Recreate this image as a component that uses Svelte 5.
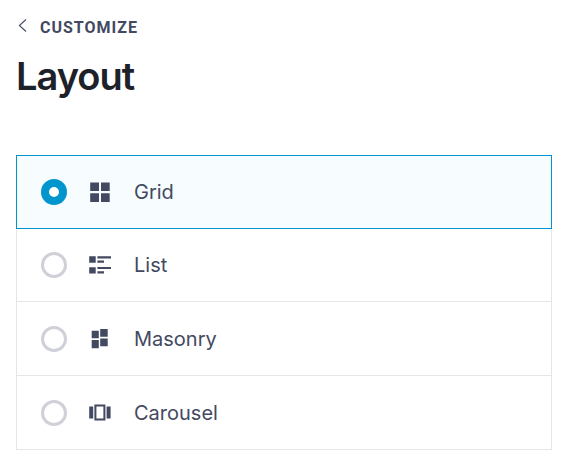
<script>
  const layouts = [
    { id: 'grid', label: 'Grid' },
    { id: 'list', label: 'List' },
    { id: 'masonry', label: 'Masonry' },
    { id: 'carousel', label: 'Carousel' }
  ];

  let selected = $state('grid');
</script>

<main class="panel">
  <a class="back" href="#customize">
    <svg class="chevron" viewBox="0 0 12 14" aria-hidden="true">
      <path d="M10 .5L3.4 6.5l6.6 6" />
    </svg>
    <span>Customize</span>
  </a>

  <h1>Layout</h1>

  <div class="options" role="radiogroup" aria-label="Layout">
    {#each layouts as layout (layout.id)}
      <label class="option" class:selected={selected === layout.id}>
        <input type="radio" name="layout" value={layout.id} bind:group={selected} />
        <svg class="icon" viewBox="0 0 24 24" aria-hidden="true">
          {#if layout.id === 'grid'}
            <path d="M2.2 2.5H11V11H2.2zM13 2.5h8.7V11H13zM2.2 13.3H11V22H2.2zM13 13.3h8.7V22H13z" />
          {:else if layout.id === 'list'}
            <path d="M1.2 3.3h6.5v6.4H1.2zM1.2 14.2h6.5v6.4H1.2z" />
            <path d="M9.4 3.3H23v2.1H9.4zM9.4 7.6h6.6v2.1H9.4zM9.4 14H23v2H9.4zM9.4 18.3h6.6v2.1H9.4z" />
          {:else if layout.id === 'masonry'}
            <path d="M3.7 3.8h7.1v7.5H3.7zM12.2 2h7.5v7.8h-7.5zM3.7 13h7.1v8.2H3.7zM12.2 11.5h7.5v7.8h-7.5z" />
          {:else}
            <path d="M1.2 5.5h4v12h-4zM18.6 5.5h4v12h-4z" />
            <path fill-rule="evenodd" d="M6.4 3.5h11v16h-11zM8.4 5.5v12h7v-12z" />
          {/if}
        </svg>
        <span class="name">{layout.label}</span>
      </label>
    {/each}
  </div>
</main>

<style>
  :global(body) {
    margin: 0;
    background: #fff;
  }

  .panel {
    padding: 16px 20px 24px 16px;
    font-family: Inter, "Liberation Sans", sans-serif;
    color: #434960;
  }

  .back {
    display: flex;
    align-items: center;
    gap: 12px;
    width: fit-content;
    color: #434960;
    font-family: Roboto, "Liberation Sans", sans-serif;
    font-size: 16px;
    font-weight: 700;
    line-height: 24px;
    letter-spacing: 1px;
    text-transform: uppercase;
    text-decoration: none;
  }

  .chevron {
    width: 12px;
    height: 14px;
    margin-bottom: 4px;
    fill: none;
    stroke: #434960;
    stroke-width: 1.1;
  }

  h1 {
    margin: 12px 0 55px;
    color: #1d2129;
    font-size: 38px;
    font-weight: 600;
    line-height: 48px;
    letter-spacing: -1px;
  }

  .option {
    display: flex;
    align-items: center;
    box-sizing: border-box;
    height: 74px;
    padding: 0 24px;
    border: 1px solid #e6e6e8;
    border-top-width: 0;
    cursor: pointer;
  }

  .option.selected {
    position: relative;
    margin-bottom: -1px;
    border: 1px solid #0095cc;
    background: #f7fcff;
  }

  input {
    appearance: none;
    box-sizing: border-box;
    width: 26px;
    height: 26px;
    margin: 0;
    border: 3px solid #cfd0d8;
    border-radius: 50%;
    background: #fff;
    cursor: pointer;
  }

  input:checked {
    border: 8px solid #0095cc;
  }

  input:focus-visible {
    outline: 2px solid #0095cc;
    outline-offset: 2px;
  }

  .icon {
    width: 24px;
    height: 24px;
    margin: 0 22px 0 21px;
    fill: #434960;
  }

  .name {
    font-size: 20px;
    line-height: 28px;
  }
</style>
